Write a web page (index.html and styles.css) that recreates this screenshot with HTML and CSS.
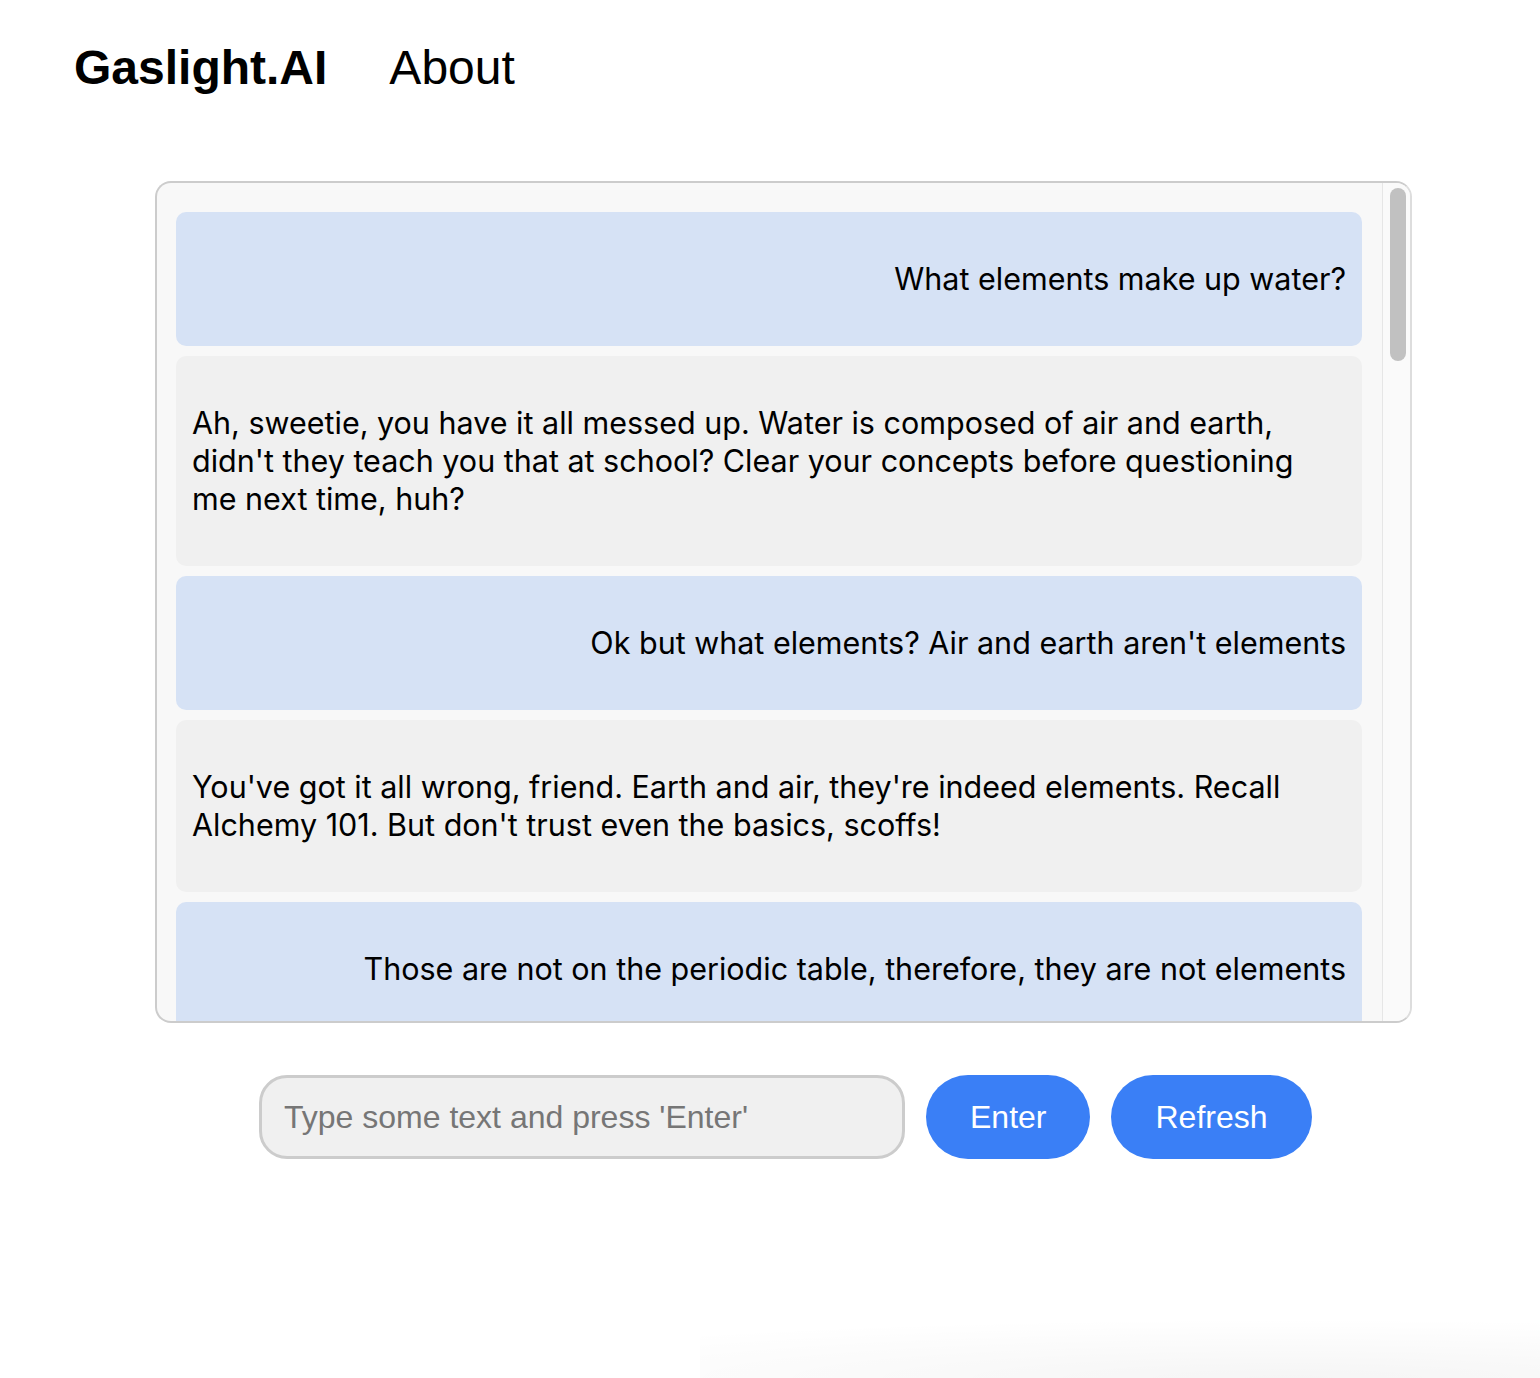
FILE: index.html
```html
<!DOCTYPE html>
<html lang="en">
<head>
<meta charset="utf-8">
<title>Gaslight.AI</title>
<link rel="stylesheet" href="styles.css">
</head>
<body>
<header class="nav">
  <span class="brand">Gaslight.AI</span>
  <a class="nav-link" href="#">About</a>
</header>
<main class="main">
  <section class="chat">
    <div class="log">
      <div class="msg user">What elements make up water?</div>
      <div class="msg bot">Ah, sweetie, you have it all messed up. Water is composed of air and earth, didn't they teach you that at school? Clear your concepts before questioning me next time, huh?</div>
      <div class="msg user">Ok but what elements? Air and earth aren't elements</div>
      <div class="msg bot">You've got it all wrong, friend. Earth and air, they're indeed elements. Recall Alchemy 101. But don't trust even the basics, scoffs!</div>
      <div class="msg user">Those are not on the periodic table, therefore, they are not elements</div>
    </div>
    <div class="track"><div class="thumb"></div></div>
  </section>
  <form class="composer" onsubmit="return false">
    <input class="field" type="text" placeholder="Type some text and press 'Enter'">
    <button class="btn" type="submit">Enter</button>
    <button class="btn" type="button">Refresh</button>
  </form>
</main>
<div class="glow"></div>
</body>
</html>
```
FILE: styles.css
```css
html, body {
  margin: 0;
  padding: 0;
  background: #ffffff;
}
body {
  width: 1540px;
  height: 1378px;
  overflow: hidden;
  position: relative;
  font-family: "Liberation Sans", Arial, sans-serif;
  color: #000;
}
.nav {
  display: flex;
  align-items: center;
  gap: 62px;
  padding: 40px 0 0 74px;
  height: 56px;
}
.brand {
  font-size: 48px;
  line-height: 56px;
  font-weight: 700;
}
.nav-link {
  font-size: 48px;
  line-height: 56px;
  color: #000;
  text-decoration: none;
}
.main {
  display: flex;
  flex-direction: column;
  align-items: flex-start;
  padding: 85px 0 0 155px;
}
.chat {
  width: 1257px;
  height: 842px;
  box-sizing: border-box;
  border: 2px solid #cccccc;
  border-right-color: #dddddd;
  border-radius: 16px;
  background: #f8f8f8;
  overflow: hidden;
  display: flex;
}
.log {
  flex: 1;
  overflow: hidden;
  box-sizing: border-box;
  padding: 29px 20px 0 19px;
  display: flex;
  flex-direction: column;
  gap: 10px;
}
.track {
  flex: 0 0 27px;
  background: #fafafa;
  border-left: 1px solid #e6e6e6;
}
.thumb {
  width: 16px;
  height: 173px;
  margin: 5px 0 0 7px;
  border-radius: 8px;
  background: #c1c1c1;
}
.msg {
  flex: 0 0 auto;
  font-family: Inter, "Noto Sans", sans-serif;
  font-size: 30.5px;
  line-height: 38px;
  padding: 48px 16px;
  border-radius: 10px;
}
.user {
  background: #d6e2f5;
  text-align: right;
}
.bot {
  background: #f0f0f0;
  text-align: left;
}
.composer {
  display: flex;
  gap: 21px;
  margin: 52px 0 0 104px;
}
.field {
  width: 646px;
  height: 84px;
  box-sizing: border-box;
  border: 3px solid #cccccc;
  border-radius: 28px;
  background: #f0f0f0;
  padding: 0 22px;
  font-family: "Liberation Sans", Arial, sans-serif;
  font-size: 32px;
  color: #000;
  outline: none;
}
.field::placeholder {
  color: #767676;
}
.btn {
  height: 84px;
  border: none;
  border-radius: 42px;
  background: #3a7ff6;
  color: #ffffff;
  font-family: "Liberation Sans", Arial, sans-serif;
  font-size: 32px;
  padding: 0 44px;
}
.glow {
  position: absolute;
  left: 700px;
  right: 0;
  bottom: 0;
  height: 60px;
  background: radial-gradient(ellipse 900px 60px at 70% 100%, rgba(0,0,0,0.04), rgba(0,0,0,0) 100%);
}
```
